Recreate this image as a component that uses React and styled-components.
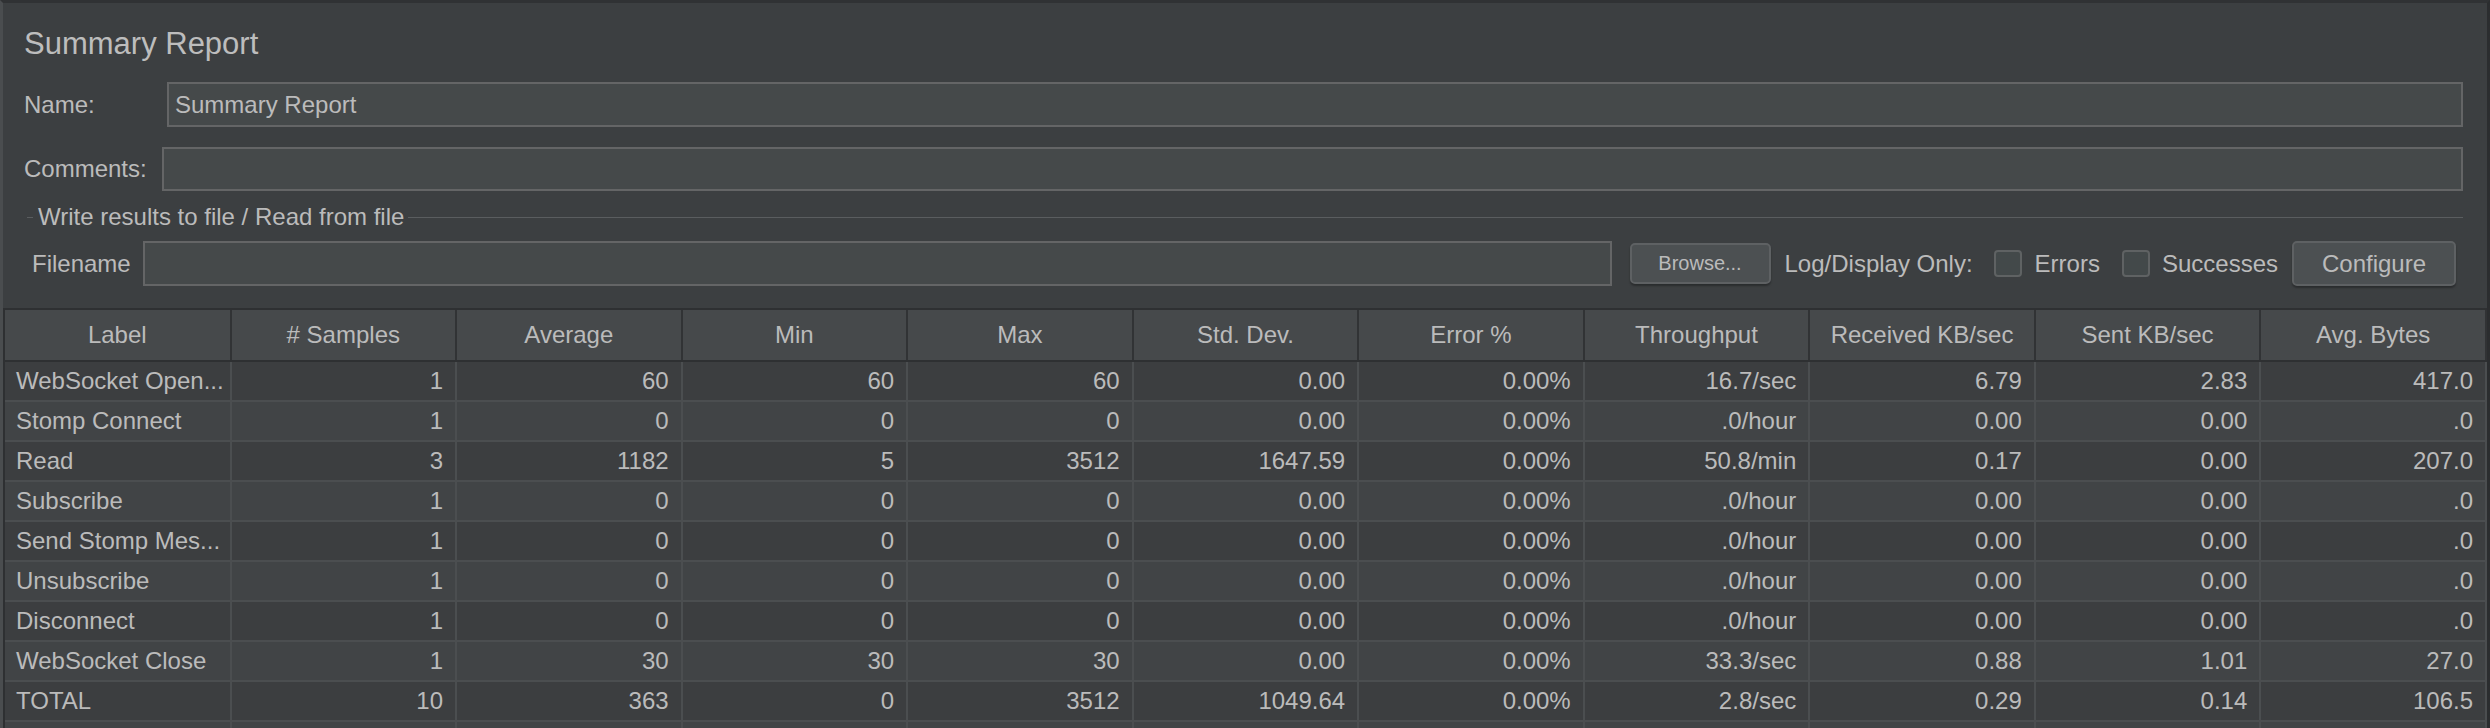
import React from "react";
import styled, { createGlobalStyle } from "styled-components";

const GlobalStyle = createGlobalStyle`
  html, body {
    margin: 0;
    padding: 0;
    background-color: #3c3f41;
  }
  * {
    box-sizing: border-box;
  }
`;

const Frame = styled.div`
  width: 2490px;
  height: 728px;
  display: flex;
  flex-direction: column;
  overflow: hidden;
  background-color: #3c3f41;
  border-top: 3px solid #303234;
  border-left: 3px solid #4a4d4f;
  border-right: 3px solid #2b2d2f;
  font-family: "Liberation Sans", Arial, sans-serif;
  font-size: 24px;
  color: #bbbbbb;
`;

const Form = styled.div`
  display: flex;
  flex-direction: column;
  padding: 0 24px 0 21px;
`;

const Title = styled.div`
  height: 36px;
  line-height: 36px;
  margin-top: 23px;
  font-size: 31px;
  color: #bdbdbd;
`;

const FieldRow = styled.div`
  display: flex;
  align-items: center;
  height: ${props => props.h}px;
  margin-top: ${props => props.top}px;
`;

const FieldLabel = styled.div`
  width: ${props => props.w}px;
  flex-shrink: 0;
  padding-left: ${props => props.indent || 0}px;
  white-space: nowrap;
`;

const TextBox = styled.div`
  flex: 1;
  height: 100%;
  display: flex;
  align-items: center;
  padding-left: 6px;
  background-color: #45494a;
  border: 2px solid #646566;
  color: #bbbbbb;
`;

const GroupTitle = styled.div`
  display: flex;
  align-items: center;
  height: 24px;
  margin-top: 14px;
`;

const GroupLine = styled.div`
  height: 1px;
  background-color: #5a5d5f;
  width: ${props => props.w ? `${props.w}px` : "auto"};
  flex: ${props => props.w ? "none" : 1};
  margin-left: ${props => props.ml || 0}px;
`;

const GroupText = styled.span`
  padding: 0 4px 0 5px;
  white-space: nowrap;
`;

const Button = styled.div`
  display: flex;
  align-items: center;
  justify-content: center;
  flex-shrink: 0;
  width: ${props => props.w}px;
  height: ${props => props.h}px;
  margin-left: ${props => props.ml}px;
  font-size: ${props => props.fs}px;
  background-color: #4c5052;
  border: 2px solid #5e6163;
  border-radius: 5px;
  box-shadow: 0 2px 2px rgba(0, 0, 0, 0.3);
  color: #bbbbbb;
`;

const InlineText = styled.span`
  margin-left: ${props => props.ml}px;
  white-space: nowrap;
  flex-shrink: 0;
`;

const Check = styled.div`
  width: 28px;
  height: 27px;
  flex-shrink: 0;
  margin-left: ${props => props.ml}px;
  background-color: #43494a;
  border: 2px solid #5f6263;
  border-radius: 4px;
`;

const TableWrap = styled.div`
  flex: 1;
  margin-top: 22px;
  overflow: hidden;
  border-top: 2px solid #2e3032;
  border-left: 2px solid #2e3032;
`;

const Table = styled.table`
  width: 100%;
  table-layout: fixed;
  border-collapse: collapse;
  font-size: 24px;
  color: #bbbbbb;
`;

const HeadCell = styled.th`
  height: 51px;
  padding: 0 6px;
  font-weight: normal;
  text-align: center;
  white-space: nowrap;
  overflow: hidden;
  background-color: #46494b;
  border-right: 2px solid #313335;
  border-bottom: 2px solid #2e3032;
`;

const Row = styled.tr`
  background-color: ${props => props.alt ? "#414446" : "#3c3e40"};
`;

const Cell = styled.td`
  height: 40px;
  padding: 0 12px 0 11px;
  text-align: ${props => props.left ? "left" : "right"};
  white-space: nowrap;
  overflow: hidden;
  border-right: 2px solid #4b4e50;
  border-bottom: 2px solid #4b4e50;
`;

const columns = [
  "Label", "# Samples", "Average", "Min", "Max", "Std. Dev.",
  "Error %", "Throughput", "Received KB/sec", "Sent KB/sec", "Avg. Bytes",
];

const rows = [
  ["WebSocket Open...", "1", "60", "60", "60", "0.00", "0.00%", "16.7/sec", "6.79", "2.83", "417.0"],
  ["Stomp Connect", "1", "0", "0", "0", "0.00", "0.00%", ".0/hour", "0.00", "0.00", ".0"],
  ["Read", "3", "1182", "5", "3512", "1647.59", "0.00%", "50.8/min", "0.17", "0.00", "207.0"],
  ["Subscribe", "1", "0", "0", "0", "0.00", "0.00%", ".0/hour", "0.00", "0.00", ".0"],
  ["Send Stomp Mes...", "1", "0", "0", "0", "0.00", "0.00%", ".0/hour", "0.00", "0.00", ".0"],
  ["Unsubscribe", "1", "0", "0", "0", "0.00", "0.00%", ".0/hour", "0.00", "0.00", ".0"],
  ["Disconnect", "1", "0", "0", "0", "0.00", "0.00%", ".0/hour", "0.00", "0.00", ".0"],
  ["WebSocket Close", "1", "30", "30", "30", "0.00", "0.00%", "33.3/sec", "0.88", "1.01", "27.0"],
  ["TOTAL", "10", "363", "0", "3512", "1049.64", "0.00%", "2.8/sec", "0.29", "0.14", "106.5"],
  ["", "", "", "", "", "", "", "", "", "", ""],
];

export default function App() {
  return (
    <>
      <GlobalStyle />
      <Frame>
        <Form>
          <Title>Summary Report</Title>
          <FieldRow h={45} top={20}>
            <FieldLabel w={143}>Name:</FieldLabel>
            <TextBox>Summary Report</TextBox>
          </FieldRow>
          <FieldRow h={44} top={20}>
            <FieldLabel w={138}>Comments:</FieldLabel>
            <TextBox />
          </FieldRow>
          <GroupTitle>
            <GroupLine w={6} ml={3} />
            <GroupText>Write results to file / Read from file</GroupText>
            <GroupLine />
          </GroupTitle>
          <FieldRow h={45} top={12} style={{ paddingRight: 7 }}>
            <FieldLabel w={119} indent={8}>Filename</FieldLabel>
            <TextBox />
            <Button w={141} h={41} ml={18} fs={20}>Browse...</Button>
            <InlineText ml={14}>Log/Display Only:</InlineText>
            <Check ml={21} />
            <InlineText ml={13}>Errors</InlineText>
            <Check ml={22} />
            <InlineText ml={12}>Successes</InlineText>
            <Button w={164} h={45} ml={14} fs={24}>Configure</Button>
          </FieldRow>
        </Form>
        <TableWrap>
          <Table>
            <thead>
              <tr>
                {columns.map(col => (
                  <HeadCell key={col}>{col}</HeadCell>
                ))}
              </tr>
            </thead>
            <tbody>
              {rows.map((row, i) => (
                <Row key={i} alt={i % 2 === 1}>
                  {row.map((value, j) => (
                    <Cell key={j} left={j === 0}>{value}</Cell>
                  ))}
                </Row>
              ))}
            </tbody>
          </Table>
        </TableWrap>
      </Frame>
    </>
  );
}
